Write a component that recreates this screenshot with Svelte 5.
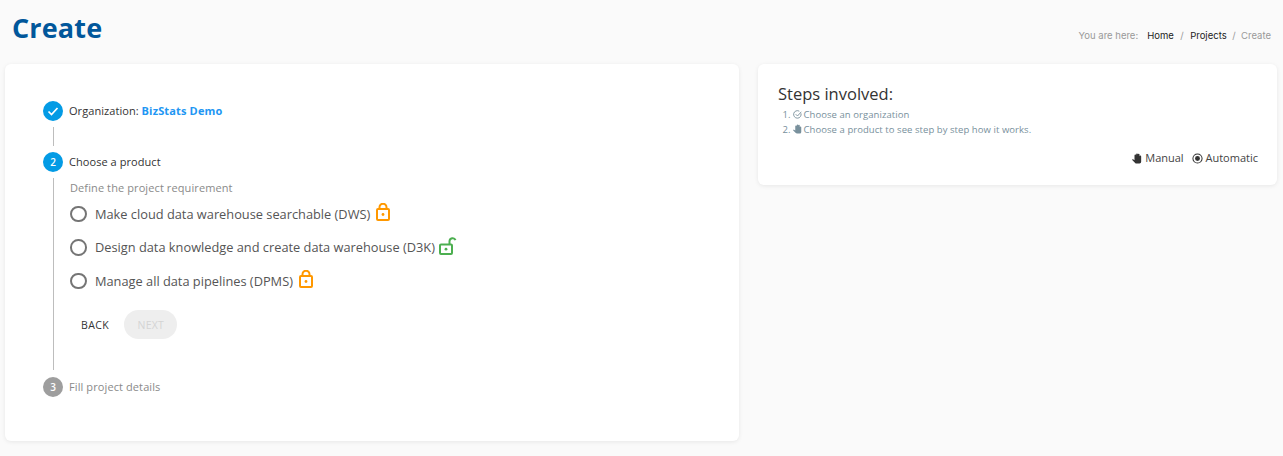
<script>
  const products = [
    { id: 'dws', name: 'Make cloud data warehouse searchable (DWS)', locked: true },
    { id: 'd3k', name: 'Design data knowledge and create data warehouse (D3K)', locked: false },
    { id: 'dpms', name: 'Manage all data pipelines (DPMS)', locked: true },
  ];
</script>

<div class="page">
  <header class="top">
    <h1>Create</h1>
    <nav class="crumbs">
      <span class="muted here">You are here:</span>
      <a href="#home">Home</a>
      <span class="muted sep">/</span>
      <a href="#projects">Projects</a>
      <span class="muted sep last">/</span>
      <span class="muted">Create</span>
    </nav>
  </header>

  <main class="cols">
    <section class="card stepper">
      <div class="step">
        <span class="dot">
          <svg width="12" height="12" viewBox="0 0 24 24"><path d="M3 13l6 6L21 6" fill="none" stroke="#fff" stroke-width="3.4" /></svg>
        </span>
        <span class="label">Organization: <b>BizStats Demo</b></span>
      </div>
      <div class="rail short"></div>

      <div class="step">
        <span class="dot">2</span>
        <span class="label">Choose a product</span>
      </div>
      <div class="rail body">
        <p class="hint">Define the project requirement</p>
        {#each products as p (p.id)}
          <label class="option">
            <input type="radio" name="product" value={p.id} />
            <span class="ring"></span>
            <span class="name">{p.name}</span>
            {#if p.locked}
              <svg class="lock" width="14" height="18" viewBox="0 0 14 18" fill="none" stroke="#ff9800" stroke-width="2">
                <rect x="1" y="6" width="12" height="11" rx="1" />
                <path d="M3.500 6V4.200a3.500 3.500 0 0 1 7 0V6" />
                <circle cx="7" cy="11.500" r="1.400" fill="#ff9800" stroke="none" />
              </svg>
            {:else}
              <svg class="lock open" width="18" height="18" viewBox="0 0 18 18" fill="none" stroke="#4caf50" stroke-width="2">
                <rect x="1" y="7.500" width="12" height="9.500" rx="1" />
                <path d="M10.500 7.500V4.200a3.100 3.100 0 0 1 6-1" />
                <circle cx="7" cy="12.200" r="1.400" fill="#4caf50" stroke="none" />
              </svg>
            {/if}
          </label>
        {/each}
        <div class="actions">
          <button class="back">BACK</button>
          <button class="next" disabled>NEXT</button>
        </div>
      </div>

      <div class="step off">
        <span class="dot">3</span>
        <span class="label">Fill project details</span>
      </div>
    </section>

    <aside class="card info">
      <h2>Steps involved:</h2>
      <ol>
        <li>
          <svg class="tiny" width="9" height="9" viewBox="0 0 12 12" fill="none" stroke="#78909c" stroke-width="1.2">
            <path d="M10.600 4.400A5 5 0 1 1 8.400 1.600" />
            <path d="M3.600 5.600L6 8l5-5.600" />
          </svg>
          Choose an organization
        </li>
        <li>
          <svg class="tiny" width="9" height="10" viewBox="0 0 24 24" fill="#78909c"><path d="M22 7v13a4 4 0 0 1-4 4h-7.500a4 4 0 0 1-2.900-1.200L0 15.100s1.300-1.200 1.300-1.200a1.200 1.200 0 0 1 1.400-.2L6 16V4.500a2 2 0 0 1 4 0V2a2 2 0 0 1 4 0v.5a2 2 0 0 1 4 0V7a2 2 0 0 1 4 0z" /></svg>
          Choose a product to see step by step how it works.
        </li>
      </ol>
      <div class="modes">
        <span class="mode">
          <svg width="10" height="11" viewBox="0 0 24 24" fill="#333"><path d="M22 7v13a4 4 0 0 1-4 4h-7.500a4 4 0 0 1-2.900-1.200L0 15.100s1.300-1.200 1.300-1.200a1.200 1.200 0 0 1 1.400-.2L6 16V4.500a2 2 0 0 1 4 0V2a2 2 0 0 1 4 0v.5a2 2 0 0 1 4 0V7a2 2 0 0 1 4 0z" /></svg>
          Manual
        </span>
        <span class="mode">
          <svg width="11" height="11" viewBox="0 0 12 12"><circle cx="6" cy="6" r="5" fill="none" stroke="#333" stroke-width="1.100" /><circle cx="6" cy="6" r="2.700" fill="#333" /></svg>
          Automatic
        </span>
      </div>
    </aside>
  </main>
</div>

<style>
  :global(body) {
    background: #fafafa;
    font-family: "Open Sans", sans-serif;
  }

  .page {
    padding: 0 6px 15px 5px;
    height: 441px;
  }

  .top {
    display: flex;
    justify-content: space-between;
    align-items: flex-end;
    height: 64px;
    padding: 0 6px 0 7px;
    box-sizing: border-box;
  }

  h1 {
    margin: 0 0 19px;
    font-size: 27px;
    line-height: 34px;
    font-weight: 700;
    letter-spacing: 0.15px;
    color: #01579b;
  }

  .crumbs {
    display: flex;
    gap: 8px;
    margin-bottom: 21px;
    font-size: 9.500px;
    line-height: 14px;
    font-family: Inter, sans-serif;
  }
  .crumbs a {
    color: #222;
    text-decoration: none;
  }
  .muted {
    color: #999;
  }
  .here {
    margin-right: 1px;
  }
  .sep {
    margin: 0 -1.500px;
  }
  .sep.last {
    margin: 0 -2.500px;
  }

  .cols {
    display: grid;
    grid-template-columns: 734px 519px;
    justify-content: space-between;
    align-items: start;
  }

  .card {
    background: #fff;
    border-radius: 6px;
    box-shadow: 0 1px 4px rgba(0, 0, 0, 0.08);
    box-sizing: border-box;
  }

  .stepper {
    height: 377px;
    padding: 37px 38px 0;
  }

  .step {
    display: flex;
    align-items: center;
    gap: 6px;
    height: 20px;
    font-size: 11px;
    color: #333;
  }

  .dot {
    flex: none;
    display: flex;
    align-items: center;
    justify-content: center;
    width: 20px;
    height: 20px;
    border-radius: 50%;
    background: #039be5;
    color: #fff;
    font-size: 10px;
    font-weight: 600;
  }

  .label {
    padding-bottom: 2px;
    letter-spacing: 0.06px;
  }
  .label b {
    font-weight: 700;
    letter-spacing: 0.15px;
    color: #2196f3;
  }

  .off .dot {
    background: #9e9e9e;
  }
  .off .label {
    color: #8a8a8a;
    letter-spacing: 0.1px;
  }

  .rail {
    margin-left: 10px;
    border-left: 1px solid #bdbdbd;
  }
  .short {
    height: 19px;
    margin-top: 6px;
    margin-bottom: 6px;
  }
  .body {
    height: 192px;
    margin-top: 6px;
    margin-bottom: 7px;
    padding: 1px 0 0 16px;
    box-sizing: border-box;
  }

  .hint {
    margin: 0 0 1px;
    font-size: 11px;
    line-height: 17px;
    color: #8a8a8a;
    letter-spacing: 0.1px;
  }

  .option {
    display: flex;
    align-items: center;
    height: 33.500px;
    font-size: 12.800px;
    color: #555;
  }
  .option input {
    position: absolute;
    opacity: 0;
    width: 0;
    height: 0;
  }
  .ring {
    flex: none;
    width: 12.500px;
    height: 12.500px;
    border: 2px solid #757575;
    border-radius: 50%;
    margin-right: 8.500px;
  }
  .lock {
    margin: 0 0 3px 6px;
    flex: none;
  }
  .lock.open {
    margin-left: 4px;
  }

  .actions {
    display: flex;
    align-items: center;
    gap: 3px;
    margin: 12px 0 0 -2px;
  }
  .actions button {
    height: 29px;
    padding: 1px 13px 0;
    border: none;
    border-radius: 15px;
    font-family: inherit;
    font-size: 10.500px;
    letter-spacing: 0.2px;
    background: none;
  }
  .actions .back {
    padding: 1px 12px 0 13px;
    letter-spacing: 0.4px;
    color: #333;
  }
  .actions .next {
    padding: 1px 13.500px 0;
    background: #eeeeee;
    color: #d4d4d4;
  }

  .info {
    height: 121px;
    padding: 19px 19px 0 20px;
  }

  h2 {
    margin: 0;
    font-size: 16.500px;
    line-height: 22px;
    font-weight: 400;
    color: #333;
  }

  ol {
    margin: 2px 0 0;
    padding-left: 15px;
    font-size: 9.500px;
    line-height: 15px;
    letter-spacing: 0.06px;
    color: #78909c;
  }
  .tiny {
    vertical-align: -1px;
    margin-right: -1px;
  }

  .modes {
    display: flex;
    justify-content: flex-end;
    gap: 8px;
    margin-top: 13px;
    font-size: 11px;
    line-height: 16px;
    color: #444;
  }
  .mode svg {
    vertical-align: -1.500px;
  }
</style>
